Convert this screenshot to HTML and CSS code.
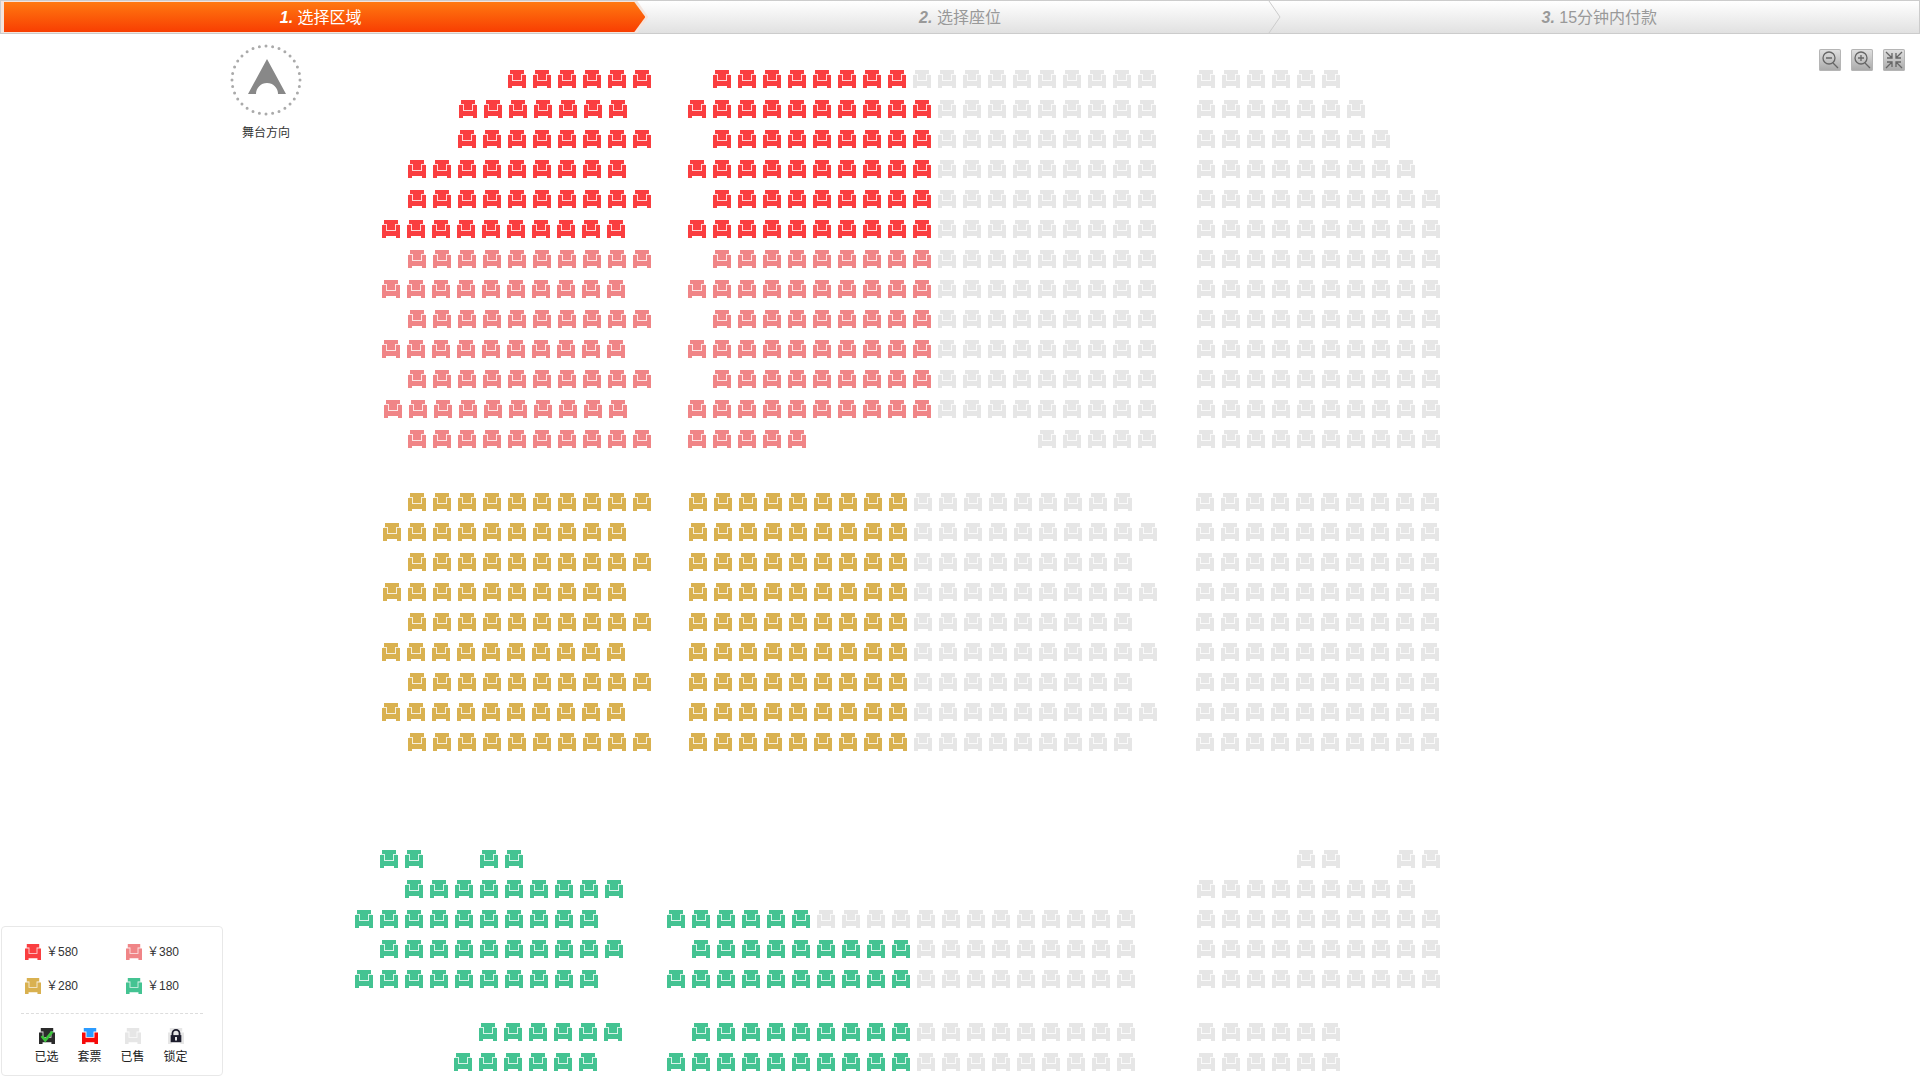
FILE: index.html
```
<!DOCTYPE html>
<html lang="zh-CN">
	<head>
		<meta charset="UTF-8">
		<title>选择区域</title>
		<link rel="stylesheet" href="styles.css">
	</head>
	<body>
		<svg class="defs" aria-hidden="true">
			<symbol id="seat" viewBox="0 0 18 18">
				<path d="M1 4h16v7H1z" fill-opacity=".2"/>
				<path d="M2 0h14v4h-3v6H5V4H2z"/>
				<path d="M0 5h4v6h10V5h4v13h-4v-2H4v2H0z"/>
			</symbol>
		</svg>
		<ol class="steps">
			<li class="active">
				<span><b>1.</b> 选择区域</span>
			</li>
			<li>
				<span><b>2.</b> 选择座位</span>
				<svg class="arrow" viewBox="0 0 13 32"><path d="M1 0l11 16L1 32" fill="none" stroke="#ccc"/></svg>
			</li>
			<li>
				<span><b>3.</b> 15分钟内付款</span>
			</li>
		</ol>
		<div id="map"></div>
		<div class="stage">
			<svg viewBox="0 0 72 72">
				<circle cx="36" cy="36" r="34" fill="none" stroke="#aaa" stroke-width="3" stroke-linecap="round" stroke-dasharray="0 1" pathLength="32"/>
				<path d="M37 15l19 35h-8a11 11 0 0 0-22 0h-8z" fill="#888"/>
			</svg>
			<p>舞台方向</p>
		</div>
		<div class="tools">
			<button type="button" aria-label="缩小">
				<svg viewBox="0 0 22 22"><circle cx="10" cy="9" r="6"/><path d="M7 9h6M14 14l5 5"/></svg>
			</button>
			<button type="button" aria-label="放大">
				<svg viewBox="0 0 22 22"><circle cx="10" cy="9" r="6"/><path d="M7 9h6M10 6v6M14 14l5 5"/></svg>
			</button>
			<button type="button" aria-label="还原">
				<svg viewBox="0 0 22 22"><path d="M3 3l6 6M9 4v5H4M19 3l-6 6M13 4v5h5M3 19l6-6M9 18v-5H4M19 19l-6-6M13 18v-5h5"/></svg>
			</button>
		</div>
		<div class="legend">
			<ul class="price">
				<li><svg class="r"><use href="#seat"/></svg>￥580</li>
				<li><svg class="p"><use href="#seat"/></svg>￥380</li>
				<li><svg class="y"><use href="#seat"/></svg>￥280</li>
				<li><svg class="g"><use href="#seat"/></svg>￥180</li>
			</ul>
			<ul class="state">
				<li>
					<svg viewBox="0 0 18 18"><use href="#seat" fill="#2b2b2b"/><path d="M3 9l4 5 8-10" fill="none" stroke="#3cc43c" stroke-width="3"/></svg>
					已选
				</li>
				<li>
					<svg viewBox="0 0 18 18"><path d="M2 0h14v4h-3v6H5V4H2z" fill="#2b9bff"/><path d="M0 5h4v6h10V5h4v13h-4v-2H4v2H0z" fill="#f60909"/></svg>
					套票
				</li>
				<li>
					<svg class="s"><use href="#seat"/></svg>
					已售
				</li>
				<li>
					<svg viewBox="0 0 18 18"><use href="#seat" fill="#e6e6e6"/><path d="M5 9V6a4 4 0 0 1 8 0v3" fill="none" stroke="#1c1c2c" stroke-width="2"/><path d="M3 8h12v8H3z" fill="#1c1c2c"/><path d="M8 10h2v4H8z" fill="#fff"/></svg>
					锁定
				</li>
			</ul>
		</div>
		<script type="text/javascript">
			//r=580 p=380 y=280 g=180 s=已售 _=空位,后面的数字是个数;
			//每一排由几段组成: [起始位置, 座位];
			var blocks = [
				[
					[[508,'r6'],[713,'r8s10'],[1197,'s6']],
					[[459,'r7'],[688,'r10s9'],[1197,'s7']],
					[[458,'r8'],[713,'r9s9'],[1197,'s8']],
					[[408,'r9'],[688,'r10s9'],[1197,'s9']],
					[[408,'r10'],[713,'r9s9'],[1197,'s10']],
					[[382,'r10'],[688,'r10s9'],[1197,'s10']],
					[[408,'p10'],[713,'p9s9'],[1197,'s10']],
					[[382,'p10'],[688,'p10s9'],[1197,'s10']],
					[[408,'p10'],[713,'p9s9'],[1197,'s10']],
					[[382,'p10'],[688,'p10s9'],[1197,'s10']],
					[[408,'p10'],[713,'p9s9'],[1197,'s10']],
					[[384,'p10'],[688,'p10s9'],[1197,'s10']],
					[[408,'p10'],[688,'p5_9s5'],[1197,'s10']]
				],
				[
					[[408,'y10'],[689,'y9s9'],[1196,'s10']],
					[[383,'y10'],[689,'y9s10'],[1196,'s10']],
					[[408,'y10'],[689,'y9s9'],[1196,'s10']],
					[[383,'y10'],[689,'y9s10'],[1196,'s10']],
					[[408,'y10'],[689,'y9s9'],[1196,'s10']],
					[[382,'y10'],[689,'y9s10'],[1196,'s10']],
					[[408,'y10'],[689,'y9s9'],[1196,'s10']],
					[[382,'y10'],[689,'y9s10'],[1196,'s10']],
					[[408,'y10'],[689,'y9s9'],[1196,'s10']]
				],
				[
					[[380,'g2_2g2'],[1297,'s2_2s2']],
					[[405,'g9'],[1197,'s9']],
					[[355,'g10'],[667,'g6s13'],[1197,'s10']],
					[[380,'g10'],[692,'g9s9'],[1197,'s10']],
					[[355,'g10'],[667,'g10s9'],[1197,'s10']]
				],
				[
					[[479,'g6'],[692,'g9s9'],[1197,'s6']],
					[[454,'g6'],[667,'g10s9'],[1197,'s6']]
				]
			];
			var html = '';
			var rowNum = 0;
			for (var i=0;i<blocks.length;i++) {
				html += '<div class="block">';
				for (var j=0;j<blocks[i].length;j++) {
					html += '<div class="row">';
					rowNum++;
					var end = 0;
					var seatNum = 0;
					blocks[i][j].forEach(function(run){
						html += '<div class="run" style="margin-left:'+(run[0]-end)+'px">';
						end = run[0];
						run[1].replace(/([a-z_])(\d+)/g,function(all,type,n){
							for (var k=0;k<n;k++) {
								if(type == '_'){
									html += '<i></i>';
								}else{
									seatNum++;
									html += '<button type="button" class="'+type+'" aria-label="'+rowNum+'排'+seatNum+'座"'+(type == 's' ? ' disabled' : '')+'><svg><use href="#seat"/></svg></button>';
								}
								end += 25;
							}
						});
						html += '</div>';
					});
					html += '</div>';
				}
				html += '</div>';
			}
			document.getElementById('map').innerHTML = html;
		</script>
	</body>
</html>
```
FILE: styles.css
```
body{
	margin: 0;
	background: #fff;
	font: 12px/16px "Liberation Sans","Noto Sans CJK SC",sans-serif;
	color: #333;
}
ul,ol,p{
	margin: 0;
	padding: 0;
	list-style: none;
}
svg{
	display: block;
}
button{
	padding: 0;
	border: 0;
	background: none;
	cursor: pointer;
}
.defs{
	display: none;
}
/*步骤条*/
.steps{
	display: flex;
	height: 30px;
	padding: 1px 0;
	border: 1px solid #ccc;
	background: linear-gradient(#fff,#e1e1e1);
	font-size: 16px;
	line-height: 32px;
	text-align: center;
	color: #999;
}
.steps li{
	flex: 1;
	position: relative;
}
.steps b{
	font-style: italic;
}
.steps .active{
	color: #fff;
}
.steps .active:before,.steps .active:after{
	content: "";
	position: absolute;
	top: 0;
	bottom: 0;
	left: 3px;
	right: -5px;
	background: linear-gradient(#ff7911,#f83e02);
	clip-path: polygon(0 0,calc(100% - 11px) 0,100% 50%,calc(100% - 11px) 100%,0 100%);
}
.steps .active:before{
	top: -1px;
	bottom: -1px;
	left: 0;
	right: -8px;
	background: #f4e4dc;
}
.steps span{
	position: relative;
	z-index: 1;
}
.arrow{
	position: absolute;
	top: -1px;
	right: -1px;
	width: 13px;
	height: 32px;
}
/*座位图*/
#map{
	padding-top: 36px;
}
.block{
	display: grid;
	gap: 12px;
	margin-bottom: 45px;
}
.block:nth-child(2){
	margin-bottom: 99px;
}
.block:nth-child(3){
	margin-bottom: 35px;
}
.block:last-child{
	margin-bottom: 0;
}
.row,.run{
	display: flex;
}
.run button,.run i{
	width: 18px;
	height: 18px;
	margin-right: 7px;
}
.run svg{
	width: 18px;
	height: 18px;
}
.r{
	fill: #fa3e40;
}
.p{
	fill: #f08587;
}
.y{
	fill: #d9b150;
}
.g{
	fill: #44c392;
}
.s{
	fill: #e6e6e6;
}
/*舞台方向*/
.stage{
	position: absolute;
	top: 44px;
	left: 230px;
	width: 72px;
	text-align: center;
}
.stage svg{
	width: 72px;
	height: 72px;
	margin-bottom: 9px;
}
/*缩放按钮*/
.tools{
	position: absolute;
	top: 49px;
	right: 15px;
	display: flex;
	gap: 10px;
}
.tools button{
	width: 22px;
	height: 22px;
	border-radius: 2px;
	background: linear-gradient(#e2e2e2,#a8a8a8);
	box-shadow: inset 0 0 0 1px #b5b5b5;
}
.tools svg{
	fill: none;
	stroke: #666;
	stroke-width: 1.3;
}
/*图例*/
.legend{
	position: fixed;
	left: 1px;
	bottom: 4px;
	padding: 17px 19px 8px;
	border: 1px solid #e8e8e8;
	border-radius: 4px;
	background: #fff;
}
.legend svg{
	width: 16px;
	height: 16px;
}
.price{
	display: grid;
	grid-template-columns: 101px 81px;
	gap: 18px 0;
	padding: 0 0 19px;
	border-bottom: 1px dashed #ddd;
}
.price li{
	display: flex;
	gap: 5px;
	padding-left: 4px;
}
.state{
	display: flex;
	padding: 14px 4px 0;
}
.state li{
	width: 43px;
	text-align: center;
	line-height: 20px;
	color: #222;
}
.state svg{
	margin: 0 auto 3px;
}
```
